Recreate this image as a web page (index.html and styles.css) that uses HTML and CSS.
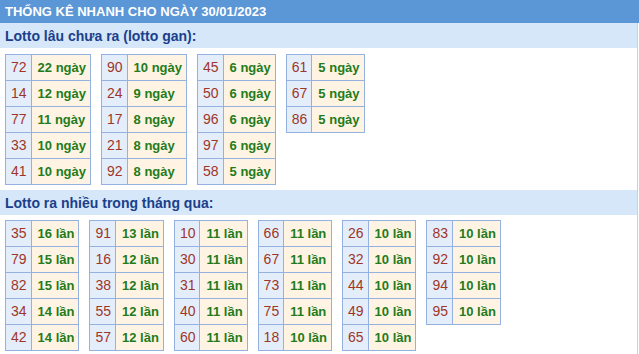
FILE: index.html
```html
<!DOCTYPE html>
<html lang="vi">
<head>
<meta charset="utf-8">
<title>Thống kê nhanh</title>
<link rel="stylesheet" href="styles.css">
</head>
<body>
<div class="title">THỐNG KÊ NHANH CHO NGÀY 30/01/2023</div>
<div class="box">
  <div class="band">Lotto lâu chưa ra (lotto gan):</div>
  <div class="tables gan">
    <table><tr><td class="n">72</td><td class="v">22 ngày</td></tr><tr><td class="n">14</td><td class="v">12 ngày</td></tr><tr><td class="n">77</td><td class="v">11 ngày</td></tr><tr><td class="n">33</td><td class="v">10 ngày</td></tr><tr><td class="n">41</td><td class="v">10 ngày</td></tr></table>
    <table><tr><td class="n">90</td><td class="v">10 ngày</td></tr><tr><td class="n">24</td><td class="v">9 ngày</td></tr><tr><td class="n">17</td><td class="v">8 ngày</td></tr><tr><td class="n">21</td><td class="v">8 ngày</td></tr><tr><td class="n">92</td><td class="v">8 ngày</td></tr></table>
    <table><tr><td class="n">45</td><td class="v">6 ngày</td></tr><tr><td class="n">50</td><td class="v">6 ngày</td></tr><tr><td class="n">96</td><td class="v">6 ngày</td></tr><tr><td class="n">97</td><td class="v">6 ngày</td></tr><tr><td class="n">58</td><td class="v">5 ngày</td></tr></table>
    <table><tr><td class="n">61</td><td class="v">5 ngày</td></tr><tr><td class="n">67</td><td class="v">5 ngày</td></tr><tr><td class="n">86</td><td class="v">5 ngày</td></tr></table>
  </div>
  <div class="band">Lotto ra nhiều trong tháng qua:</div>
  <div class="tables nhieu">
    <table><tr><td class="n">35</td><td class="v">16 lần</td></tr><tr><td class="n">79</td><td class="v">15 lần</td></tr><tr><td class="n">82</td><td class="v">15 lần</td></tr><tr><td class="n">34</td><td class="v">14 lần</td></tr><tr><td class="n">42</td><td class="v">14 lần</td></tr></table>
    <table><tr><td class="n">91</td><td class="v">13 lần</td></tr><tr><td class="n">16</td><td class="v">12 lần</td></tr><tr><td class="n">38</td><td class="v">12 lần</td></tr><tr><td class="n">55</td><td class="v">12 lần</td></tr><tr><td class="n">57</td><td class="v">12 lần</td></tr></table>
    <table><tr><td class="n">10</td><td class="v">11 lần</td></tr><tr><td class="n">30</td><td class="v">11 lần</td></tr><tr><td class="n">31</td><td class="v">11 lần</td></tr><tr><td class="n">40</td><td class="v">11 lần</td></tr><tr><td class="n">60</td><td class="v">11 lần</td></tr></table>
    <table><tr><td class="n">66</td><td class="v">11 lần</td></tr><tr><td class="n">67</td><td class="v">11 lần</td></tr><tr><td class="n">73</td><td class="v">11 lần</td></tr><tr><td class="n">75</td><td class="v">11 lần</td></tr><tr><td class="n">18</td><td class="v">10 lần</td></tr></table>
    <table><tr><td class="n">26</td><td class="v">10 lần</td></tr><tr><td class="n">32</td><td class="v">10 lần</td></tr><tr><td class="n">44</td><td class="v">10 lần</td></tr><tr><td class="n">49</td><td class="v">10 lần</td></tr><tr><td class="n">65</td><td class="v">10 lần</td></tr></table>
    <table><tr><td class="n">83</td><td class="v">10 lần</td></tr><tr><td class="n">92</td><td class="v">10 lần</td></tr><tr><td class="n">94</td><td class="v">10 lần</td></tr><tr><td class="n">95</td><td class="v">10 lần</td></tr></table>
  </div>
</div>
</body>
</html>
```

FILE: styles.css
```css
html, body {
  margin: 0;
  padding: 0;
  background: #ffffff;
}
body {
  font-family: "Liberation Sans", Arial, sans-serif;
  width: 639px;
}
.title {
  background: #5b96d6;
  color: #ffffff;
  font-size: 13px;
  font-weight: bold;
  height: 23px;
  line-height: 24px;
  padding-left: 5px;
  white-space: nowrap;
}
.box {
  width: 637px;
  border-right: 1px solid #c3d2ea;
}
.band {
  background: #d5e7f9;
  color: #1b408b;
  font-size: 14px;
  font-weight: bold;
  height: 25px;
  line-height: 26px;
  padding-left: 5px;
}
.tables {
  display: flex;
  align-items: flex-start;
  padding-left: 5px;
}
.gan {
  gap: 10px;
  padding-top: 6px;
  padding-bottom: 5px;
}
.nhieu {
  gap: 10px;
  padding-top: 5px;
  padding-bottom: 4px;
}
table {
  border-collapse: collapse;
}
td {
  border: 1px solid #95b1e0;
  height: 25px;
  padding: 0 4px 0 6px;
  font-size: 13px;
  line-height: 15px;
  white-space: nowrap;
}
td.n {
  background: #e4eefb;
  color: #9e3628;
  font-size: 14px;
  padding: 0 4px 0 5px;
}
td.v {
  background: #fff4e3;
  color: #237b1c;
  font-weight: bold;
}
```
